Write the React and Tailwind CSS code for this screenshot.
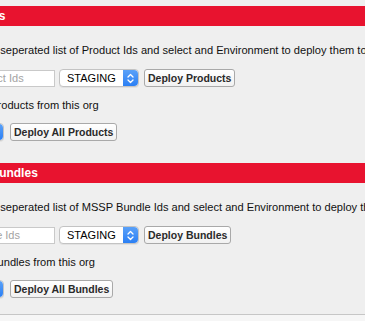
import React from 'react';

function Stepper() {
    return (
        <span className="flex w-[15px] h-full items-center justify-center rounded-r-[4px] bg-gradient-to-b from-[#5aa1f8] to-[#2a7ff4]">
            <svg width="7" height="11" viewBox="0 0 7 11" fill="none" stroke="white" strokeWidth="1.3" strokeLinecap="round" strokeLinejoin="round">
                <path d="M1 4 L3.5 1.5 L6 4" />
                <path d="M1 7 L3.5 9.5 L6 7" />
            </svg>
        </span>
    );
}

function EnvSelect({ className = '' }) {
    return (
        <div className={'flex h-[18px] w-[80px] items-stretch rounded-[4px] border border-[#c3c3c3] bg-white shadow-[0_1px_0_rgba(0,0,0,0.05)] ' + className}>
            <span className="flex-1 pl-[7px] text-[11px] leading-[16px] text-black">
                STAGING
            </span>
            <Stepper />
        </div>
    );
}

function MacButton({ children, className = '' }) {
    return (
        <button className={'h-[18px] rounded-[3px] border border-[#a9a9a9] bg-gradient-to-b from-white to-[#f1f1f1] px-[3px] text-[10.5px] font-bold leading-[16px] text-[#2a2a2a] ' + className}>
            {children}
        </button>
    );
}

function Section({ title, what, idsLabel, deployLabel, allLabel }) {
    return (
        <div>
            <div className="flex h-[20px] items-center bg-[#e8132f] pl-[8px] text-[12px] font-bold text-white">
                {title}
            </div>
            <div className="px-[22px]">
                <p className="mt-[17px] -ml-[2px] whitespace-nowrap text-[11.1px] leading-[14px] text-[#111]">
                    Enter a comma seperated list of {what} and select and
                    Environment to deploy them to.
                </p>
                <div className="mt-[12px] flex items-center">
                    <input
                        type="text"
                        placeholder={idsLabel}
                        className="ml-[41px] h-[17px] w-[90px] border border-[#c9c9c9] bg-white px-[2px] text-[11px] text-black placeholder:text-[#a3a3a3] outline-none"
                    />
                    <EnvSelect className="ml-[4px]" />
                    <MacButton className="ml-[5px]">{deployLabel}</MacButton>
                </div>
                <p className="mt-[11px] ml-[2px] whitespace-nowrap text-[11.1px] leading-[14px] text-[#111]">
                    Or deploy all {allLabel} from this org
                </p>
                <div className="mt-[11px] flex items-center">
                    <EnvSelect />
                    <MacButton className="ml-[6px]">
                        Deploy All {allLabel[0].toUpperCase() + allLabel.slice(1)}
                    </MacButton>
                </div>
            </div>
        </div>
    );
}

export default function App() {
    return (
        <div className="h-[321px] w-[365px] overflow-hidden bg-[#efefef] font-['Liberation_Sans',Arial,sans-serif]">
            <div className="-ml-[98px] w-[600px] pt-[6px]">
                <Section
                    title="Deploy Products"
                    what="Product Ids"
                    idsLabel="Product Ids"
                    deployLabel="Deploy Products"
                    allLabel="products"
                />
                <div className="mt-[22px]">
                    <Section
                        title="Deploy MSSP Bundles"
                        what="MSSP Bundle Ids"
                        idsLabel="Bundle Ids"
                        deployLabel="Deploy Bundles"
                        allLabel="bundles"
                    />
                </div>
                <div className="mt-[16px] h-[40px] border-t border-[#c6c6c6] bg-[#f6f6f6]" />
            </div>
        </div>
    );
}
